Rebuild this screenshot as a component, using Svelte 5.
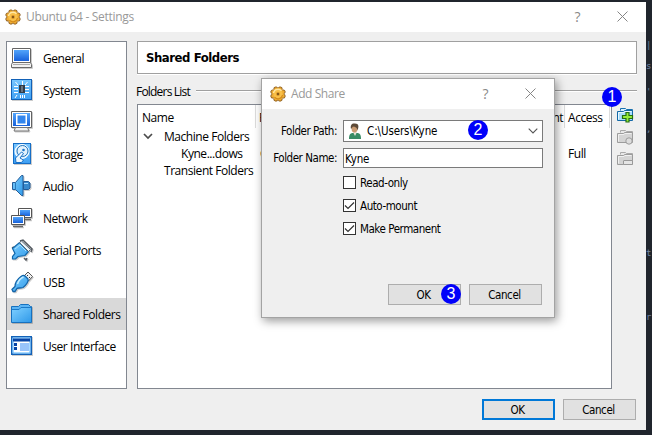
<script>
  const sections = [
    { id: 'general', label: 'General' },
    { id: 'system', label: 'System' },
    { id: 'display', label: 'Display' },
    { id: 'storage', label: 'Storage' },
    { id: 'audio', label: 'Audio' },
    { id: 'network', label: 'Network' },
    { id: 'serial', label: 'Serial Ports' },
    { id: 'usb', label: 'USB' },
    { id: 'shared', label: 'Shared Folders' },
    { id: 'ui', label: 'User Interface' }
  ];
  const options = [
    { label: 'Read-only', on: false },
    { label: 'Auto-mount', on: true },
    { label: 'Make Permanent', on: true }
  ];
  const teeth = [0, 45, 90, 135, 180, 225, 270, 315];
</script>

{#snippet gear()}
  <svg class="gear" width="16" height="16" viewBox="0 0 16 16">
    <g fill="#f0ae35" stroke="#8a5a1c" stroke-width=".9">
      {#each teeth as a}
        <circle cx="8" cy="2.400" r="1.900" transform="rotate({a + 22.5} 8 8)" />
      {/each}
      <circle cx="8" cy="8" r="5.9" stroke="none" />
    </g>
    <circle cx="8" cy="8" r="4.6" fill="#f8c04a" />
    <path d="M3.500 7a4.600 4.600 0 0 1 8-2.200" fill="none" stroke="#ffe8a6" stroke-width="1.4" />
    <path d="M12.500 9a4.600 4.600 0 0 1-8 2.200" fill="none" stroke="#d38a1a" stroke-width="1.2" />
    <circle cx="8" cy="8" r="1.900" fill="#d79328" />
    <circle cx="8" cy="8" r="1" fill="#694316" />
  </svg>
{/snippet}

{#snippet windowKeys()}
  <span class="help">?</span>
  <svg class="close" width="11" height="11" viewBox="0 0 11 11"><path d="M.5.5l10 10M10.5.5l-10 10" stroke="#858585" fill="none" /></svg>
{/snippet}

{#snippet folderTool(kind)}
  <svg width="18" height="18" viewBox="0 0 18 18">
    {#if kind === 'add'}
      <path d="M3.5 3.5v-2h5l1 1h6v3" fill="#d7efff" stroke="#1870ae" />
      <path d="M.5 13.5v-9h6l1-1h8v10z" fill="#a9dcfb" stroke="#1569a7" />
      <path d="M1.500 12.500v-7h5.500l1-1h6.500" fill="none" stroke="#e9f8ff" />
      <path d="M9 5.5h3v3h3.500v3H12v3.500H9v-3.500H5.500v-3H9z" fill="#96ec3a" stroke="#246d13" stroke-width="1.2" />
    {:else}
      <path d="M3.5 3.5v-2h5l1 1h6v3" fill="#e7e7e7" stroke="#aaa" />
      <path d="M.5 13.5v-9h6l1-1h8v10z" fill="#d4d4d4" stroke="#9c9c9c" />
      <path d="M1.500 12.500v-7h5.500l1-1h6.500" fill="none" stroke="#f0f0f0" />
      {#if kind === 'edit'}
        <circle cx="12" cy="12" r="3.2" fill="#ddd" stroke="#9c9c9c" />
      {:else}
        <rect x="6.5" y="9.5" width="9" height="4" rx=".5" fill="#e5e5e5" stroke="#999" />
      {/if}
    {/if}
  </svg>
{/snippet}

{#snippet sectionIcon(id)}
  <svg class="icon" width="24" height="24" viewBox="0 0 24 24">
    {#if id === 'general'}
      <path d="M2.500 2.500h18v14h-18z" fill="#fff" stroke="#656565" />
      <path d="M4 4h15v11H4z" fill="url(#screen)" />
      <path d="M2.500 16.500h18l1 2v3h-20v-3z" fill="#f2f2f2" stroke="#6a6a6a" />
      <path d="M3 18.500h17" stroke="#aaa" />
    {:else if id === 'system'}
      <rect x="1.5" y="1.5" width="20" height="20" fill="url(#pale)" stroke="#1261b7" />
      <path d="M4 8.5h4M4 11.5h4M4 14.5h4M15 8.5h4M15 11.5h4M15 14.5h4M12.5 3v4M15 7l2.500-3M8 7L5.500 4M10.500 17v3M12.500 17v3M14.500 17v3M7 17l-2 3" stroke="#fff" />
      <path d="M9 7h6v8H9z" fill="#303c49" /><path d="M11 8h2v6h-2z" fill="#6b7580" />
    {:else if id === 'display'}
      <path d="M1.500 1.500h20v16h-20z" fill="#fff" stroke="#626262" />
      <path d="M3 3h17v13H3z" fill="url(#screen)" />
      <rect x="6.750" y="4.750" width="9.500" height="9.500" fill="#3386ed" stroke="#fff" stroke-width="1.500" />
      <path d="M5.500 17.500h12l1.500 3.500H4z" fill="#f1f1f1" stroke="#777" />
    {:else if id === 'storage'}
      <rect x="3.500" y="1.500" width="17" height="20" fill="url(#pale)" stroke="#166ec6" />
      <circle cx="12" cy="9.500" r="7" fill="#d6edff" stroke="#fff" />
      <circle cx="12.500" cy="9" r="5.500" fill="#e3f2fd" stroke="#1c72bb" />
      <circle cx="13.500" cy="8" r="1.300" fill="#1b75c9" />
      <path d="M5.500 16l6-6 2 1.500-3.500 4.500 3.500 2-2 2.500H6z" fill="#eef8ff" stroke="#1770c8" />
    {:else if id === 'audio'}
      <path d="M2.500 8.500h3l6-7h1.500v20h-1.500l-6-6h-3z" fill="url(#sky)" stroke="#245c98" />
      <path d="M5.500 8.500v7" stroke="#297ab9" />
      <path d="M13.500 7.500h5l1.500 1.500v5l-1.500 1.500h-5z" fill="#3989cc" stroke="#245c98" />
      <path d="M14 9.500h4" stroke="#a9dcff" />
    {:else if id === 'network'}
      <path d="M8.500 2.500h13v9h-13z" fill="#fff" stroke="#555" /><path d="M10 4h10v6H10z" fill="url(#screen)" />
      <path d="M14 13.500h7" stroke="#666" stroke-width="1.500" />
      <path d="M1.500 9.500h13v9h-13z" fill="#fff" stroke="#555" /><path d="M3 11h10v6H3z" fill="url(#screen)" />
      <path d="M3 20.500h10" stroke="#666" stroke-width="1.500" />
    {:else if id === 'serial'}
      <path d="M10 3l3-1 9 9-1 3M4 9l-2 1M14 20l2 2 1-2" fill="#e6e6e6" stroke="#535960" stroke-width="1.500" />
      <path d="M2.500 10.500l7-6 9 9-3.500 4-7 1-2.500 2.500H2.500v-2.500l2.500-3z" fill="url(#sky)" stroke="#1167aa" stroke-width="1.200" />
      <path d="M9.500 4.500l9 9 2-2-9-8.500z" fill="#eef6fb" stroke="#56656f" />
      <path d="M5 11l5-4 6 6" stroke="#a9e2ff" fill="none" />
    {:else if id === 'usb'}
      <path d="M14 6l4-4 4.500 4.500-4 4.500z" fill="#f2f2f2" stroke="#555" />
      <path d="M17 5l1 1M19 7l1 1" stroke="#333" />
      <path d="M11 6.500c2-1.500 3-1.500 4-.5l3 3c1 2-2 6.500-5 8.500-3 1-5 0-6 1l-2 3H3l-1-2 3-3c0-3 2-7 6-10z" fill="url(#sky)" stroke="#1264a9" stroke-width="1.300" />
      <path d="M7.500 14c1-3.500 3.500-6 6-7" stroke="#c4edff" fill="none" stroke-width="1.500" />
    {:else if id === 'shared'}
      <path d="M1.500 20.500V4.500h7l2-2h8l2 2h1v16z" fill="#5bb4f4" stroke="#1671bf" />
      <path d="M2 8h7l2-2h10v14H2z" fill="url(#sky)" /><path d="M2 7.500h7l2-2h10" stroke="#1b79c7" fill="none" />
    {:else}
      <rect x="1.750" y="2.750" width="19.500" height="17.500" fill="#fff" stroke="#1261b7" stroke-width="1.500" />
      <path d="M3 4h17v15H3z" fill="none" stroke="#54b4ff" />
      <path d="M3 4.500h17v3H3z" fill="#0744a5" />
      <path d="M4 9h3v3H4zM4 13h3v3H4z" fill="#0744a5" /><path d="M10 9h9v8h-9z" fill="#98c4fb" />
    {/if}
  </svg>
{/snippet}

<svg class="defs" width="0" height="0">
  <defs>
    <linearGradient id="screen" x2="0" y2="1"><stop stop-color="#53a5fb" /><stop offset="1" stop-color="#1761db" /></linearGradient>
    <linearGradient id="pale" x2="0" y2="1"><stop stop-color="#79c7ff" /><stop offset="1" stop-color="#3e9ff3" /></linearGradient>
    <linearGradient id="sky" x2="1" y2="1"><stop stop-color="#7dcfff" /><stop offset="1" stop-color="#319ae9" /></linearGradient>
  </defs>
</svg>

<div class="desktop">
  <div class="window">
    <header class="titlebar">{@render gear()}<span class="title main">Ubuntu 64 - Settings</span>{@render windowKeys()}</header>
    <div class="body">
      <nav>
        {#each sections as s}
          <div class="section" class:selected={s.id === 'shared'}>{@render sectionIcon(s.id)}<span>{s.label}</span></div>
        {/each}
      </nav>
      <main>
        <h1><span>Shared Folders</span></h1>
        <div class="group"><span>Folders List</span><i></i></div>
        <div class="content">
          <div class="tree">
            <div class="columns"><span class="c1">Name</span><span class="c2">Path</span><span class="c3">Auto-mount</span><span class="c4">Access</span></div>
            <div class="row">
              <svg class="twist" width="10" height="7" viewBox="0 0 10 7"><path d="M1 1l4 4 4-4" fill="none" stroke="#4b4b4b" stroke-width="1.700" /></svg>
              <span>Machine Folders</span>
            </div>
            <div class="row"><span class="child">Kyne...dows</span><span class="path">C:\</span><span class="full">Full</span></div>
            <div class="row"><span class="top">Transient Folders</span></div>
          </div>
          <div class="tools">{@render folderTool('add')}{@render folderTool('edit')}{@render folderTool('remove')}</div>
        </div>
      </main>
    </div>
    <footer><button class="default">OK</button><button>Cancel</button></footer>
  </div>
  <aside class="editor"><b class="a">|</b><b class="s">s</b><b class="d">'</b><b class="e">,</b><b class="t">t</b><b class="r">r</b></aside>

  <section class="dialog">
    <header class="titlebar">{@render gear()}<span class="title">Add Share</span>{@render windowKeys()}</header>
    <div class="form">
      <div class="field">
        <span class="label">Folder Path:</span>
        <div class="combo">
          <svg width="14" height="17" viewBox="0 0 14 17">
            <path d="M1 16c0-4 1-6 4-6h4c3 0 4 2 4 6z" fill="#388b65" />
            <path d="M5 9l2 4 2-4z" fill="#e8e2d7" />
            <ellipse cx="6.500" cy="5.500" rx="3" ry="4" fill="#c99b72" />
            <path d="M3 6C2 2 4 0 7 .500c4 0 4 3 2.500 7C9 4 7 4 5 3.500z" fill="#5c4937" />
          </svg>
          <span>C:\Users\Kyne</span>
          <svg class="arrow" width="10" height="6" viewBox="0 0 10 6"><path d="M.7.7L5 5 9.300.700" fill="none" stroke="#555" stroke-width="1.100" /></svg>
        </div>
      </div>
      <div class="field name"><span class="label">Folder Name:</span><div class="input">Kyne</div></div>
      <div class="checks">
        {#each options as o}
          <div class="check"><span class="box">{#if o.on}<svg width="11" height="11" viewBox="0 0 11 11"><path d="M1 5.500l3 3 6-6" fill="none" stroke="#333" stroke-width="1.200" /></svg>{/if}</span><span class="text">{o.label}</span></div>
        {/each}
      </div>
      <div class="actions"><button>OK</button><button>Cancel</button></div>
    </div>
  </section>

  <span class="badge one">1</span>
  <span class="badge two">2</span>
  <span class="badge three">3</span>
</div>

<style>
  :global(body) { margin: 0; overflow: hidden; }
  * { box-sizing: border-box; }
  .defs { position: absolute; }
  .desktop { position: relative; display: flex; width: 652px; height: 435px; padding-top: 2px; background: #20252d; overflow: hidden; font: 12px/16px "Open Sans", "Noto Sans", sans-serif; letter-spacing: -.45px; color: #000; white-space: nowrap; }
  .window { display: flex; flex-direction: column; width: 646px; height: 428px; background: #efefef; }
  .titlebar { display: flex; align-items: center; height: 30px; flex: none; background: #fff; color: #999; padding: 0 18px 0 5px; }
  .title { margin-left: 5px; flex: 1; letter-spacing: -.3px; }
  .help { font: 14px/18px "Open Sans", sans-serif; color: #888; margin: -1px 37px 0 0; }
  .close { margin-top: -2px; }
  .body { display: flex; padding: 9px 9px 0 6px; gap: 10px; }
  nav { width: 121px; height: 348px; background: #fff; border: 1px solid #828790; }
  .section { display: flex; align-items: center; height: 32px; padding-left: 3px; }
  .section span { margin-left: 9px; padding-top: 2px; }
  .selected { background: #d9d9d9; }
  .icon { flex: none; filter: drop-shadow(1px 1px 0 #0003); }
  main { flex: 1; }
  h1 { margin: 0; height: 33px; border: 1px solid #a0a0a0; background: #fff; font: bold 13px/32px "DejaVu Sans Condensed", "DejaVu Sans", sans-serif; letter-spacing: -.45px; padding-left: 8px; box-shadow: 0 1px #fff; }
  .group { display: flex; align-items: center; height: 30px; gap: 6px; padding-top: 6px; }
  .group span { letter-spacing: -.8px; margin-left: -1px; }
  .group i { flex: 1; height: 2px; background: #a0a0a0; border-bottom: 1px solid #fff; margin-bottom: 2px; }
  .content { display: flex; gap: 5px; }
  .tree { width: 475px; height: 285px; border: 1px solid #828790; background: #fff; }
  .columns { display: grid; grid-template-columns: 118px 240px 69px 45px; height: 23px; line-height: 25px; }
  .columns span { border-right: 1px solid #ddd; padding-left: 4px; height: 23px; overflow: hidden; }
  .columns .c2 { padding-left: 3px; }
  .columns .c3 { text-align: right; padding-right: 5px; }
  .columns .c4 { padding-left: 3px; }
  .row { display: flex; align-items: center; height: 17px; line-height: 17px; }
  .twist { margin: 0 11px 0 5px; }
  .top { margin-left: 26px; }
  .child { margin-left: 43px; width: 79px; }
  .path { width: 308px; }
  .tools { display: flex; flex-direction: column; gap: 4px; padding-top: 3px; }
  button { width: 73px; height: 21px; padding: 0 2px 0 0; border: 1px solid #adadad; background: #e1e1e1; color: #000; font: 11.5px/18px "DejaVu Sans Condensed", "DejaVu Sans", sans-serif; letter-spacing: -.4px; }
  button.default { border: 2px solid #0078d7; }
  footer { display: flex; justify-content: flex-end; gap: 8px; padding: 10px 10px 0 0; }
  .editor { position: relative; width: 6px; color: #7184a3; font: 9px/14px "DejaVu Sans Mono", monospace; letter-spacing: 0; overflow: hidden; }
  .editor b { position: absolute; font-weight: normal; left: 0; }
  .a { top: 36px; } .s { top: 57px; } .d { top: 83px; } .e { top: 120px; } .t { top: 244px; } .r { top: 308px; }

  .dialog { position: absolute; left: 261px; top: 78px; width: 294px; height: 240px; border: 1px solid #a3a3a3; background: #efefef; box-shadow: 2px 3px 9px #0006; font: 11.5px/16px "DejaVu Sans Condensed", "DejaVu Sans", sans-serif; letter-spacing: -.45px; }
  .dialog .titlebar { padding: 0 18px 0 8px; }
  .dialog .title { font: 12px/16px "Open Sans", sans-serif; margin-left: 5px; letter-spacing: -.42px; }
  .form { display: flex; flex-direction: column; padding: 11px 11px 0 0; }
  .field { display: flex; align-items: center; height: 22px; }
  .label { width: 75px; display: flex; justify-content: flex-end; margin-right: 6px; }
  .combo, .input { flex: 1; display: flex; align-items: center; height: 22px; border: 1px solid #7a7a7a; background: #fff; padding: 0 4px; }
  .combo span { margin-left: 5px; flex: 1; letter-spacing: -.1px; }
  .name { height: 20px; margin-top: 6px; }
  .input { height: 20px; padding: 2px 1px 0; letter-spacing: -.2px; }
  .checks { padding: 8px 0 0 81px; display: flex; flex-direction: column; gap: 10px; }
  .check { display: flex; align-items: center; height: 13px; gap: 4px; }
  .box { width: 13px; height: 13px; border: 1px solid #333; background: #fff; display: flex; }
  .actions { display: flex; justify-content: flex-end; gap: 8px; margin-top: 49px; padding-right: 1px; }
  .badge { position: absolute; width: 20px; height: 20px; border-radius: 50%; background: #0000fa; color: #fff; font: 16px/20px "Liberation Sans", sans-serif; text-align: center; letter-spacing: 0; }
  .one { left: 602px; top: 87px; } .two { left: 468px; top: 120px; } .three { left: 441px; top: 284px; }
</style>
